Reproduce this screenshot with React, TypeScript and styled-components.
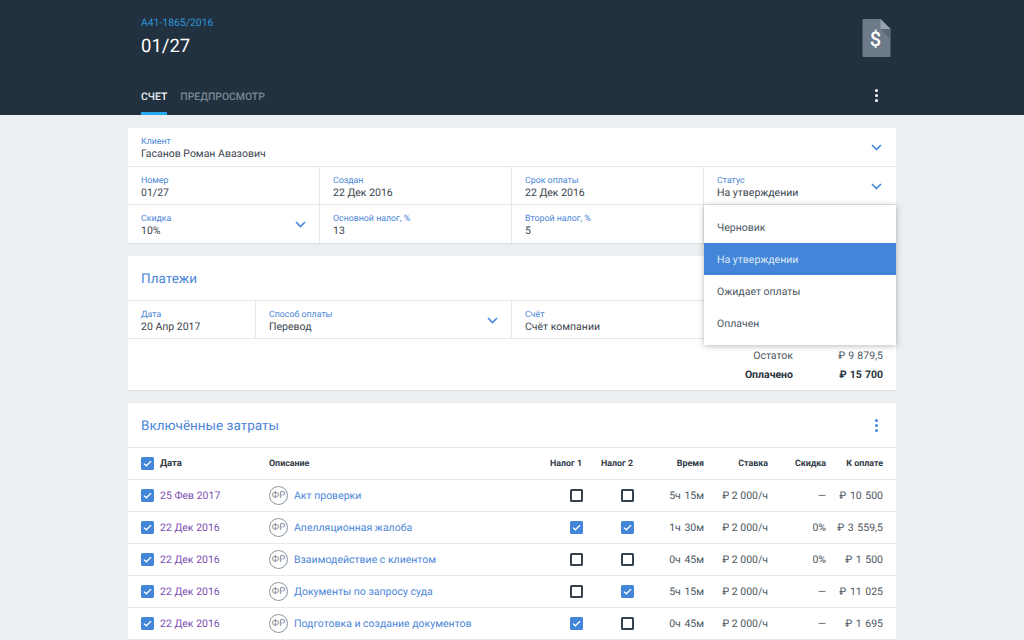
import React from "react";
import styled, { createGlobalStyle } from "styled-components";

const Global = createGlobalStyle`
  html, body { margin: 0; padding: 0; height: 640px; overflow: hidden; background: #eceff1; }
  body { font-family: Roboto, "Liberation Sans", sans-serif; color: #37424f; text-rendering: geometricPrecision; }
  * { box-sizing: border-box; }
`;
const Page = styled.div`width: 1024px; height: 640px; overflow: hidden; display: flex; flex-direction: column;`;
const Header = styled.header`height: 115px; background: #223140; padding: 0 128px 0 141px; display: flex; flex-direction: column; flex: none;`;
const HeaderTop = styled.div`display: flex; justify-content: space-between; height: 80px; flex: none;`;
const Crumb = styled.div`margin-top: 16px; font-size: 10.4px; line-height: 13px; color: #2b95d6;`;
const Title = styled.div`margin-top: 5px; font-size: 18.5px; line-height: 24px; color: #fff;`;
const DocIcon = styled.svg`width: 29px; height: 40px; margin: 18px 5px 0 0;`;
const TabRow = styled.div`display: flex; align-items: flex-start; gap: 13px; position: relative; flex: 1;`;
const Tab = styled.div<{ $active?: boolean }>`
  height: 35px; padding-top: 10px; font-size: 10.4px; line-height: 13px; font-weight: 500;
  color: ${p => (p.$active ? "#eef1f3" : "#7b8791")};
  border-bottom: 3px solid ${p => (p.$active ? "#29a9f0" : "transparent")};
`;
const Kebab = styled.div<{ $color: string }>`
  display: flex; flex-direction: column; gap: 2px; width: 3px;
  i { display: block; width: 3px; height: 3px; border-radius: 50%; background: ${p => p.$color}; }
`;
const TabKebab = styled(Kebab)`margin: 9px 18px 0 auto;`;
const Main = styled.main`padding: 13px 128px 0; display: flex; flex-direction: column; gap: 13px; position: relative;`;
const Card = styled.section`background: #fff; box-shadow: 0 1px 1px rgba(0,0,0,.06); flex: none;`;
const FieldRow = styled.div<{ $cols: string; $h?: number }>`
  display: grid; grid-template-columns: ${p => p.$cols}; height: ${p => p.$h ?? 38}px; border-bottom: 1px solid #e6e9eb;
  &:last-child { border-bottom: 0; }
`;
const ChevronBox = styled.svg`position: absolute; right: 14px; top: 16px; width: 11px; height: 7px;`;
const Field = styled.div`
  padding: 9px 13px 0; border-right: 1px solid #e6e9eb; position: relative;
  &:last-child { border-right: 0; }
  &:not(:last-child) ${ChevronBox} { right: 13px; }
`;
const Label = styled.div`font-size: 8.8px; line-height: 11px; color: #4a86d8;`;
const Value = styled.div`font-size: 10.5px; line-height: 14px; margin-top: -1px; color: #3a4550;`;
const SectionHead = styled.div`height: 45px; padding: 0 18px 0 13px; display: flex; align-items: center; justify-content: space-between; border-bottom: 1px solid #e6e9eb;`;
const SectionTitle = styled.h2`margin: 0; padding-top: 2px; font-size: 13.5px; font-weight: 400; color: #4a86d8;`;
const Summary = styled.div`padding: 7px 13px 0; height: 51px; display: grid; grid-template-columns: 1fr 90px; grid-auto-rows: 19px; justify-items: end; align-items: center;`;
const SumCell = styled.div<{ $bold?: boolean }>`font-size: 10.5px; word-spacing: 0.5px; font-weight: ${p => (p.$bold ? 700 : 400)}; color: ${p => (p.$bold ? "#26323e" : "#4a5560")};`;
const Menu = styled.div`
  position: absolute; left: 704px; top: 90px; width: 192px; height: 140px; padding: 6px 0; background: #fff;
  box-shadow: 0 1px 6px rgba(0,0,0,.28); z-index: 2;
`;
const MenuItem = styled.div<{ $active?: boolean }>`
  height: 32px; line-height: 33px; padding-left: 13px; font-size: 10.5px;
  background: ${p => (p.$active ? "#4285d9" : "transparent")};
  color: ${p => (p.$active ? "#dfe9f6" : "#4a5560")};
`;
const Grid = "128px 262px 51px 51px 71px 64px 58px 57px";
const TableHead = styled.div`display: grid; grid-template-columns: ${Grid}; padding: 0 13px; height: 32px; align-items: center; border-bottom: 1px solid #e6e9eb;`;
const Row = styled(TableHead)``;
const Th = styled.div<{ $left?: boolean }>`font-size: 8.9px; font-weight: 700; color: #2f3a46; text-align: ${p => (p.$left ? "left" : "right")};`;
const DateCell = styled.div`display: flex; align-items: center; gap: 6px; font-size: 10.5px; color: #7d4fb0;`;
const HeadDate = styled(DateCell)`font-size: 9.5px; font-weight: 700; color: #2f3a46; margin-top: -1px;`;
const Desc = styled.div`display: flex; align-items: center; gap: 6px; font-size: 10.5px; color: #4a86d8;`;
const Avatar = styled.div`width: 19px; height: 19px; border-radius: 50%; border: 1px solid #8b95a0; color: #78838e; font-size: 9.5px; display: flex; align-items: center; justify-content: center;`;
const Num = styled.div<{ $tight?: boolean }>`font-size: 10.5px; word-spacing: ${p => (p.$tight ? 0 : 1)}px; color: #4a5560; text-align: right; white-space: nowrap;`;
const BoxCell = styled.div`display: flex; justify-content: flex-end; margin-right: -1px;`;
const Box = styled.div<{ $on?: boolean }>`
  width: 13px; height: 13px; border-radius: 1.5px; display: flex; align-items: center; justify-content: center;
  background: ${p => (p.$on ? "#4285d9" : "#fff")};
  border: ${p => (p.$on ? "0" : "2px solid #37424f")};
`;
const Check = ({ on }: { on?: boolean }) => (
  <Box $on={on}>
    {on && (
      <svg width="9" height="7" viewBox="0 0 9 7">
        <path d="M1 3.6 L3.3 5.8 L8 1.2" fill="none" stroke="#fff" strokeWidth="1.3" />
      </svg>
    )}
  </Box>
);
const Chevron = () => (
  <ChevronBox viewBox="0 0 11 7">
    <path d="M1 1 L5.5 5.5 L10 1" fill="none" stroke="#4285d9" strokeWidth="1.6" />
  </ChevronBox>
);
const Dots = ({ color, as: C = Kebab }: { color: string; as?: typeof Kebab }) => (
  <C $color={color}><i /><i /><i /></C>
);

const rows = [
  ["25 Фев 2017", "Акт проверки", false, false, "5ч 15м", "—", "₽ 10 500"],
  ["22 Дек 2016", "Апелляционная жалоба", true, true, "1ч 30м", "0%", "₽ 3 559,5"],
  ["22 Дек 2016", "Взаимодействие с клиентом", false, false, "0ч 45м", "0%", "₽ 1 500"],
  ["22 Дек 2016", "Документы по запросу суда", false, true, "5ч 15м", "—", "₽ 11 025"],
  ["22 Дек 2016", "Подготовка и создание документов", true, false, "0ч 45м", "—", "₽ 1 695"],
] as const;

export default function App() {
  return (
    <Page>
      <Global />
      <Header>
        <HeaderTop>
          <div>
            <Crumb>А41-1865/2016</Crumb>
            <Title>01/27</Title>
          </div>
          <DocIcon viewBox="0 0 29 40">
            <path d="M1 1 H18 L28 11 V38 a1 1 0 0 1 -1 1 H1 a1 1 0 0 1 -1 -1 V2 a1 1 0 0 1 1 -1z" fill="#6c7a8a" transform="translate(.5 0)" />
            <path d="M18.5 11 L28.5 21 V11z" fill="#5a6777" />
            <path d="M18.5 1 L28.5 11 H18.5z" fill="#9aa4ae" />
            <text x="13.5" y="27.5" textAnchor="middle" fontSize="20" fontWeight="500" fontFamily="Roboto" fill="#fff">$</text>
          </DocIcon>
        </HeaderTop>
        <TabRow>
          <Tab $active>СЧЕТ</Tab>
          <Tab>ПРЕДПРОСМОТР</Tab>
          <Dots color="#fff" as={TabKebab} />
        </TabRow>
      </Header>
      <Main>
        <Card>
          <FieldRow $cols="1fr" $h={39}>
            <Field><Label>Клиент</Label><Value>Гасанов Роман Авазович</Value><Chevron /></Field>
          </FieldRow>
          <FieldRow $cols="repeat(4, 192px)">
            <Field><Label>Номер</Label><Value>01/27</Value></Field>
            <Field><Label>Создан</Label><Value>22 Дек 2016</Value></Field>
            <Field><Label>Срок оплаты</Label><Value>22 Дек 2016</Value></Field>
            <Field><Label>Статус</Label><Value>На утверждении</Value><Chevron /></Field>
          </FieldRow>
          <FieldRow $cols="repeat(4, 192px)">
            <Field><Label>Скидка</Label><Value>10%</Value><Chevron /></Field>
            <Field><Label>Основной налог, %</Label><Value>13</Value></Field>
            <Field><Label>Второй налог, %</Label><Value>5</Value></Field>
            <Field />
          </FieldRow>
        </Card>
        <Card>
          <SectionHead><SectionTitle>Платежи</SectionTitle></SectionHead>
          <FieldRow $cols="128px 256px 1fr">
            <Field><Label>Дата</Label><Value>20 Апр 2017</Value></Field>
            <Field><Label>Способ оплаты</Label><Value>Перевод</Value><Chevron /></Field>
            <Field><Label>Счёт</Label><Value>Счёт компании</Value></Field>
          </FieldRow>
          <Summary>
            <SumCell>Остаток</SumCell><SumCell>₽ 9 879,5</SumCell>
            <SumCell $bold>Оплачено</SumCell><SumCell $bold>₽ 15 700</SumCell>
          </Summary>
        </Card>
        <Card>
          <SectionHead>
            <SectionTitle>Включённые затраты</SectionTitle>
            <Dots color="#4285d9" />
          </SectionHead>
          <TableHead>
            <HeadDate><Check on />Дата</HeadDate>
            <Th $left>Описание</Th>
            <Th>Налог 1</Th><Th>Налог 2</Th><Th>Время</Th><Th>Ставка</Th><Th>Скидка</Th><Th>К оплате</Th>
          </TableHead>
          {rows.map((r, i) => (
            <Row key={i}>
              <DateCell><Check on />{r[0]}</DateCell>
              <Desc><Avatar>ФР</Avatar>{r[1]}</Desc>
              <BoxCell><Check on={r[2]} /></BoxCell>
              <BoxCell><Check on={r[3]} /></BoxCell>
              <Num>{r[4]}</Num>
              <Num $tight>₽ 2 000/ч</Num>
              <Num>{r[5]}</Num>
              <Num>{r[6]}</Num>
            </Row>
          ))}
        </Card>
        <Menu>
          <MenuItem>Черновик</MenuItem>
          <MenuItem $active>На утверждении</MenuItem>
          <MenuItem>Ожидает оплаты</MenuItem>
          <MenuItem>Оплачен</MenuItem>
        </Menu>
      </Main>
    </Page>
  );
}
